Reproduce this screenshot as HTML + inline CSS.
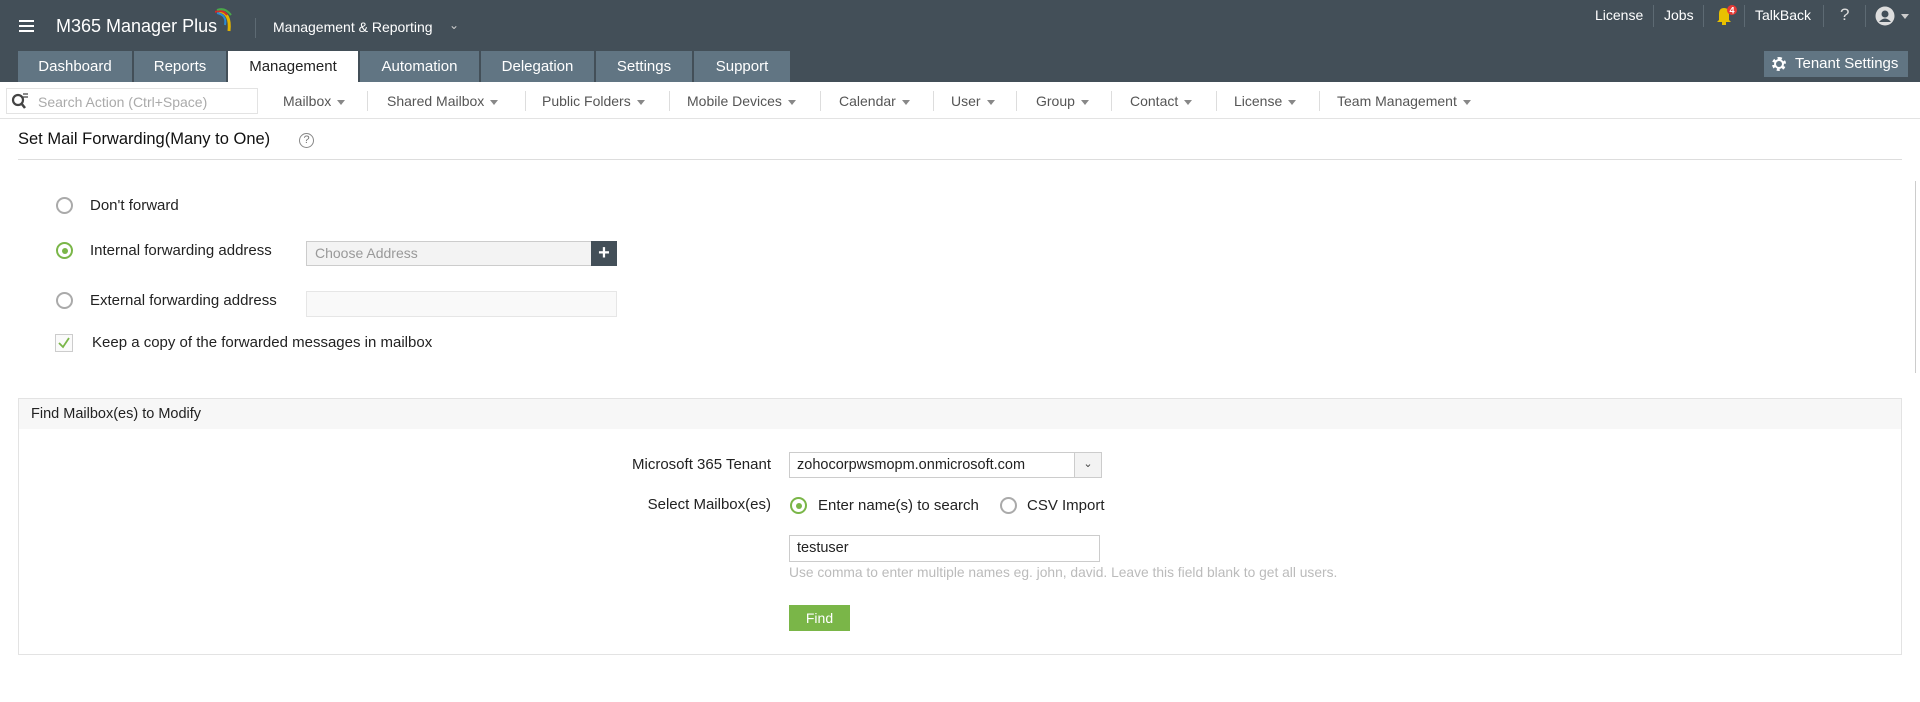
<!DOCTYPE html>
<html><head><meta charset="utf-8"><style>
*{margin:0;padding:0;box-sizing:border-box}
body{width:1920px;height:702px;overflow:hidden;background:#fff;font-family:"Liberation Sans",sans-serif;color:#222;position:relative}
.a{position:absolute;white-space:nowrap}
.hdr{position:absolute;left:0;top:0;width:1920px;height:82px;background:#434f58}
.tab{position:absolute;top:51px;height:31px;background:#617583;color:#fff;font-size:15px;line-height:31px;text-align:center}
.tab.on{background:#fff;color:#222}
.tr{color:#fff;font-size:14px;top:7px}
.vs{position:absolute;width:1px;background:#5d6a73}
.nav{color:#555;font-size:14px;top:93px}
.car{display:inline-block;border-left:4px solid transparent;border-right:4px solid transparent;border-top:5px solid #888;vertical-align:middle;margin-left:6px}
.ns{position:absolute;top:91px;height:20px;width:1px;background:#ddd}
.rad{position:absolute;width:17px;height:17px;border:2px solid #aaa;border-radius:50%;background:#fff}
.rad.on{border-color:#7ab648}
.rad.on::after{content:"";position:absolute;left:3.5px;top:3.5px;width:6px;height:6px;border-radius:50%;background:#7ab648}
.lb{font-size:15px;color:#222}
</style></head><body>
<div class="hdr"></div>
<div class="a" style="left:19px;top:20px;width:15px;height:2px;background:#fff;box-shadow:0 5px 0 #fff,0 10px 0 #fff"></div>
<div class="a" style="left:56px;top:16px;color:#fff;font-size:18px">M365 Manager Plus</div>
<svg class="a" style="left:215px;top:7px" width="20" height="28"><path d="M4 4 Q16 6 14 24" stroke="#e2b400" stroke-width="3" fill="none"/><path d="M2 6 Q12 8 10 18" stroke="#2a8ad4" stroke-width="2" fill="none"/><path d="M0 5 Q8 2 12 8" stroke="#d02c2c" stroke-width="2" fill="none"/><path d="M2 3 Q10 0 16 8" stroke="#4aa84a" stroke-width="2" fill="none"/></svg>
<div class="vs" style="left:255px;top:18px;height:20px"></div>
<div class="a" style="left:273px;top:19px;color:#fff;font-size:14px">Management &amp; Reporting</div>
<div class="a" style="left:449px;top:18px;color:#ccc;font-size:12px">&#8964;</div>
<div class="tab" style="left:18px;width:114px">Dashboard</div>
<div class="tab" style="left:134px;width:92px">Reports</div>
<div class="tab on" style="left:228px;width:130px">Management</div>
<div class="tab" style="left:360px;width:119px">Automation</div>
<div class="tab" style="left:481px;width:113px">Delegation</div>
<div class="tab" style="left:596px;width:96px">Settings</div>
<div class="tab" style="left:694px;width:96px">Support</div>
<div class="a tr" style="left:1595px">License</div>
<div class="vs" style="left:1653px;top:5px;height:22px"></div>
<div class="a tr" style="left:1664px">Jobs</div>
<div class="vs" style="left:1703px;top:5px;height:22px"></div>
<svg class="a" style="left:1715px;top:5px" width="26" height="22"><path d="M2 17 L4 15 L4 9 Q4 3 9 3 Q14 3 14 9 L14 15 L16 17 Z" fill="#e8c000"/><rect x="7" y="17" width="4" height="3" fill="#e8c000"/><circle cx="17" cy="5" r="5" fill="#e53935"/><text x="17" y="8.5" font-size="9" fill="#fff" text-anchor="middle" font-family="Liberation Sans" font-weight="bold">4</text></svg>
<div class="vs" style="left:1744px;top:5px;height:22px"></div>
<div class="a tr" style="left:1755px">TalkBack</div>
<div class="vs" style="left:1823px;top:5px;height:22px"></div>
<div class="a tr" style="left:1840px;font-size:17px;top:5px;color:#ddd">?</div>
<div class="vs" style="left:1865px;top:5px;height:22px"></div>
<svg class="a" style="left:1875px;top:6px" width="20" height="20"><circle cx="10" cy="10" r="9.5" fill="#ddd"/><circle cx="10" cy="8" r="3.5" fill="#434f58"/><path d="M4 16 Q10 9 16 16" fill="#434f58"/></svg>
<div class="a" style="left:1901px;top:14px;border-left:4px solid transparent;border-right:4px solid transparent;border-top:5px solid #ccc"></div>
<div class="a" style="left:1764px;top:51px;width:144px;height:26px;background:#617583;color:#fff;font-size:15px;line-height:26px;padding-left:31px">Tenant Settings</div>
<div class="a" style="left:1772px;top:57px;width:14px;height:14px;border-radius:50%;border:3px dotted #fff;background:#617583"></div>
<div class="a" style="left:1776px;top:61px;width:6px;height:6px;border-radius:50%;background:#617583;box-shadow:0 0 0 2px #fff"></div>
<div class="a" style="left:0;top:118px;width:1920px;height:1px;background:#e3e3e3"></div>
<div class="a" style="left:6px;top:88px;width:252px;height:26px;border:1px solid #e3e3e3"></div>
<svg class="a" style="left:11px;top:92px" width="18" height="18"><circle cx="7" cy="8" r="5" stroke="#444" stroke-width="2.2" fill="none"/><path d="M10 11 L14 16" stroke="#444" stroke-width="2.5"/><path d="M12 2h5M12 5h5" stroke="#444" stroke-width="1.3"/></svg>
<div class="a" style="left:38px;top:94px;color:#aaa;font-size:14px">Search Action (Ctrl+Space)</div>
<div class="a nav" style="left:283px">Mailbox<span class="car"></span></div>
<div class="ns" style="left:367px"></div>
<div class="a nav" style="left:387px">Shared Mailbox<span class="car"></span></div>
<div class="ns" style="left:525px"></div>
<div class="a nav" style="left:542px">Public Folders<span class="car"></span></div>
<div class="ns" style="left:669px"></div>
<div class="a nav" style="left:687px">Mobile Devices<span class="car"></span></div>
<div class="ns" style="left:820px"></div>
<div class="a nav" style="left:839px">Calendar<span class="car"></span></div>
<div class="ns" style="left:933px"></div>
<div class="a nav" style="left:951px">User<span class="car"></span></div>
<div class="ns" style="left:1016px"></div>
<div class="a nav" style="left:1036px">Group<span class="car"></span></div>
<div class="ns" style="left:1111px"></div>
<div class="a nav" style="left:1130px">Contact<span class="car"></span></div>
<div class="ns" style="left:1216px"></div>
<div class="a nav" style="left:1234px">License<span class="car"></span></div>
<div class="ns" style="left:1319px"></div>
<div class="a nav" style="left:1337px">Team Management<span class="car"></span></div>
<div class="a" style="left:18px;top:130px;font-size:16.5px;color:#111">Set Mail Forwarding(Many to One)</div>
<div class="a" style="left:299px;top:133px;width:15px;height:15px;border:1px solid #888;border-radius:50%;font-size:11px;line-height:13px;text-align:center;color:#777">?</div>
<div class="a" style="left:18px;top:159px;width:1884px;height:1px;background:#ddd"></div>
<div class="a" style="left:1915px;top:181px;width:1px;height:192px;background:#ccc"></div>
<div class="rad" style="left:56px;top:197px"></div>
<div class="a lb" style="left:90px;top:197px">Don't forward</div>
<div class="rad on" style="left:56px;top:242px"></div>
<div class="a lb" style="left:90px;top:242px">Internal forwarding address</div>
<div class="a" style="left:306px;top:241px;width:286px;height:25px;border:1px solid #ccc;background:#f3f3f3;color:#999;font-size:14px;line-height:23px;padding-left:8px">Choose Address</div>
<div class="a" style="left:591px;top:241px;width:26px;height:25px;background:#434f58;color:#fff;font-size:20px;line-height:24px;text-align:center;font-weight:bold">+</div>
<div class="rad" style="left:56px;top:292px"></div>
<div class="a lb" style="left:90px;top:292px">External forwarding address</div>
<div class="a" style="left:306px;top:291px;width:311px;height:26px;border:1px solid #e6e6e6;background:#f9f9f9"></div>
<div class="a" style="left:55px;top:334px;width:18px;height:18px;border:1px solid #ccc;background:#fafafa"></div>
<svg class="a" style="left:57px;top:336px" width="14" height="14"><path d="M2 7 L6 11 L12 2" stroke="#7ab648" stroke-width="1.8" fill="none"/></svg>
<div class="a lb" style="left:92px;top:334px">Keep a copy of the forwarded messages in mailbox</div>
<div class="a" style="left:18px;top:398px;width:1884px;height:257px;border:1px solid #e3e3e3"></div>
<div class="a" style="left:19px;top:399px;width:1882px;height:30px;background:#f7f7f7"></div>
<div class="a" style="left:31px;top:406px;font-size:14.5px;color:#222">Find Mailbox(es) to Modify</div>
<div class="a lb" style="left:571px;width:200px;text-align:right;top:456px">Microsoft 365 Tenant</div>
<div class="a" style="left:789px;top:452px;width:313px;height:26px;border:1px solid #ccc;font-size:14.5px;line-height:24px;padding-left:7px">zohocorpwsmopm.onmicrosoft.com</div>
<div class="a" style="left:1074px;top:452px;width:28px;height:26px;border:1px solid #ccc;background:#f3f3f3;text-align:center;font-size:11px;line-height:22px;color:#444">&#8964;</div>
<div class="a lb" style="left:571px;width:200px;text-align:right;top:496px">Select Mailbox(es)</div>
<div class="rad on" style="left:790px;top:497px"></div>
<div class="a lb" style="left:818px;top:497px">Enter name(s) to search</div>
<div class="rad" style="left:1000px;top:497px"></div>
<div class="a lb" style="left:1027px;top:497px">CSV Import</div>
<div class="a" style="left:789px;top:535px;width:311px;height:27px;border:1px solid #ccc;font-size:14.5px;line-height:25px;padding-left:7px">testuser</div>
<div class="a" style="left:789px;top:565px;font-size:13.8px;color:#bbb">Use comma to enter multiple names eg. john, david. Leave this field blank to get all users.</div>
<div class="a" style="left:789px;top:605px;width:61px;height:26px;background:#7ab648;color:#fff;font-size:14px;line-height:26px;text-align:center">Find</div>
</body></html>
